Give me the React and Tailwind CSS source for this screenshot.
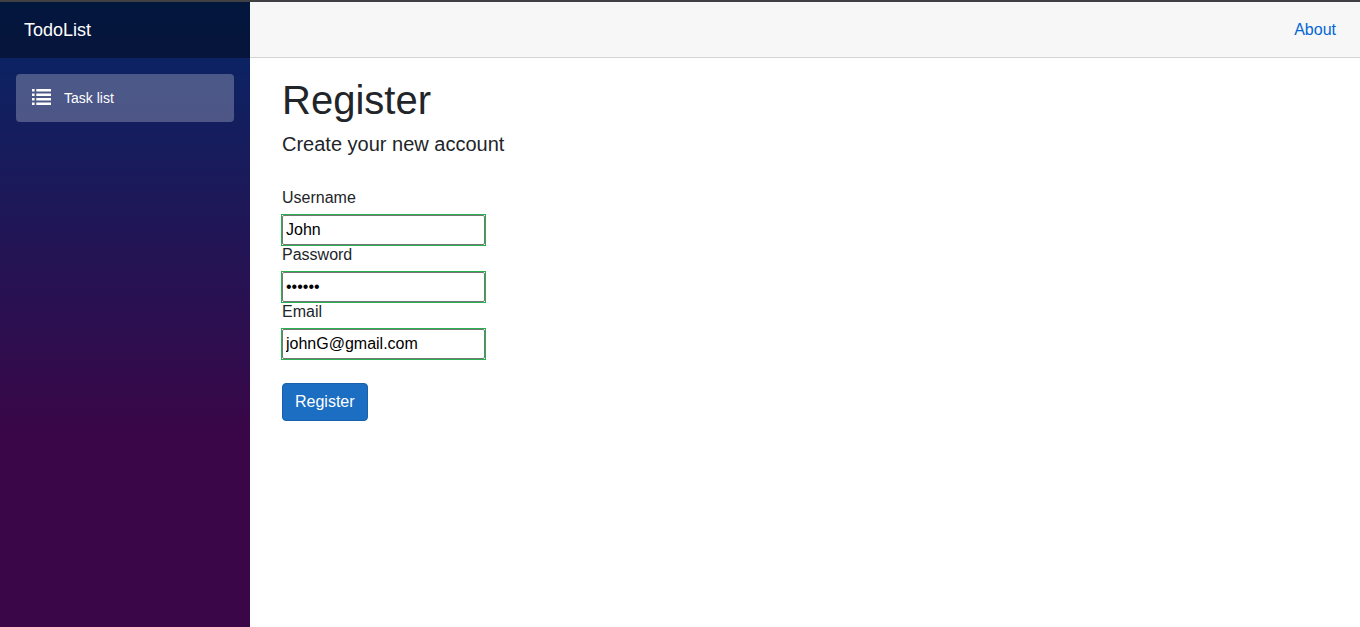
const fields = [
  { id: "username", label: "Username", type: "text", value: "John" },
  { id: "password", label: "Password", type: "password", value: "secret" },
  { id: "email", label: "Email", type: "email", value: "johnG@gmail.com" },
];

function ListIcon() {
  return (
    <svg className="mb-0.5 h-4 w-[19px]" viewBox="0 0 19 16" fill="#fff" aria-hidden="true">
      <path d="M0 0h2.6v2.6H0zM4.3 0H19v2.6H4.3zM0 4.6h2.6v2.4H0zM4.3 4.6H19v2.4H4.3zM0 9h2.6v2.6H0zM4.3 9H19v2.6H4.3zM0 13.4h2.6V16H0zM4.3 13.4H19V16H4.3z" />
    </svg>
  );
}

export default function App() {
  return (
    <div className="flex min-h-screen flex-col border-t-2 border-[#404044] bg-white font-['Liberation_Sans',Arial,sans-serif] text-base text-[#212529]">
      <div className="flex grow">
        <aside className="w-[250px] shrink-0 bg-[linear-gradient(180deg,#052767_0%,#3a0647_70%)]">
          <div className="flex h-14 items-center bg-black/40 px-6">
            <a href="#" className="text-lg text-white">TodoList</a>
          </div>
          <nav className="p-4">
            <a href="#tasks" className="flex h-12 items-center gap-[13px] rounded bg-white/25 px-4 text-sm text-white">
              <ListIcon />
              Task list
            </a>
          </nav>
        </aside>
        <div className="min-w-0 grow">
          <header className="flex h-14 items-center justify-end border-b border-[#d6d5d5] bg-[#f7f7f7] px-6">
            <a href="#about" className="text-[#0366d6]">About</a>
          </header>
          <main className="px-8 pt-[18px]">
            <h1 className="mb-2 text-[40px] leading-12">Register</h1>
            <p className="mb-8 text-xl leading-6">Create your new account</p>
            <form onSubmit={(event) => event.preventDefault()}>
              {fields.map(({ id, label, type, value }) => (
                <div key={id} className="flex flex-col items-start">
                  <label htmlFor={id} className="mb-[7px] leading-5">{label}</label>
                  <span className="flex outline outline-[#26b050]">
                    <input
                      id={id}
                      type={type}
                      defaultValue={value}
                      className="h-[30px] w-[203px] rounded-[2px] border border-[#767676] bg-white px-[3px] text-black outline-none"
                    />
                  </span>
                </div>
              ))}
              <button type="submit" className="mt-6 h-[38px] rounded border border-[#1861ac] bg-[#1b6ec2] px-3 text-white">
                Register
              </button>
            </form>
          </main>
        </div>
      </div>
    </div>
  );
}
